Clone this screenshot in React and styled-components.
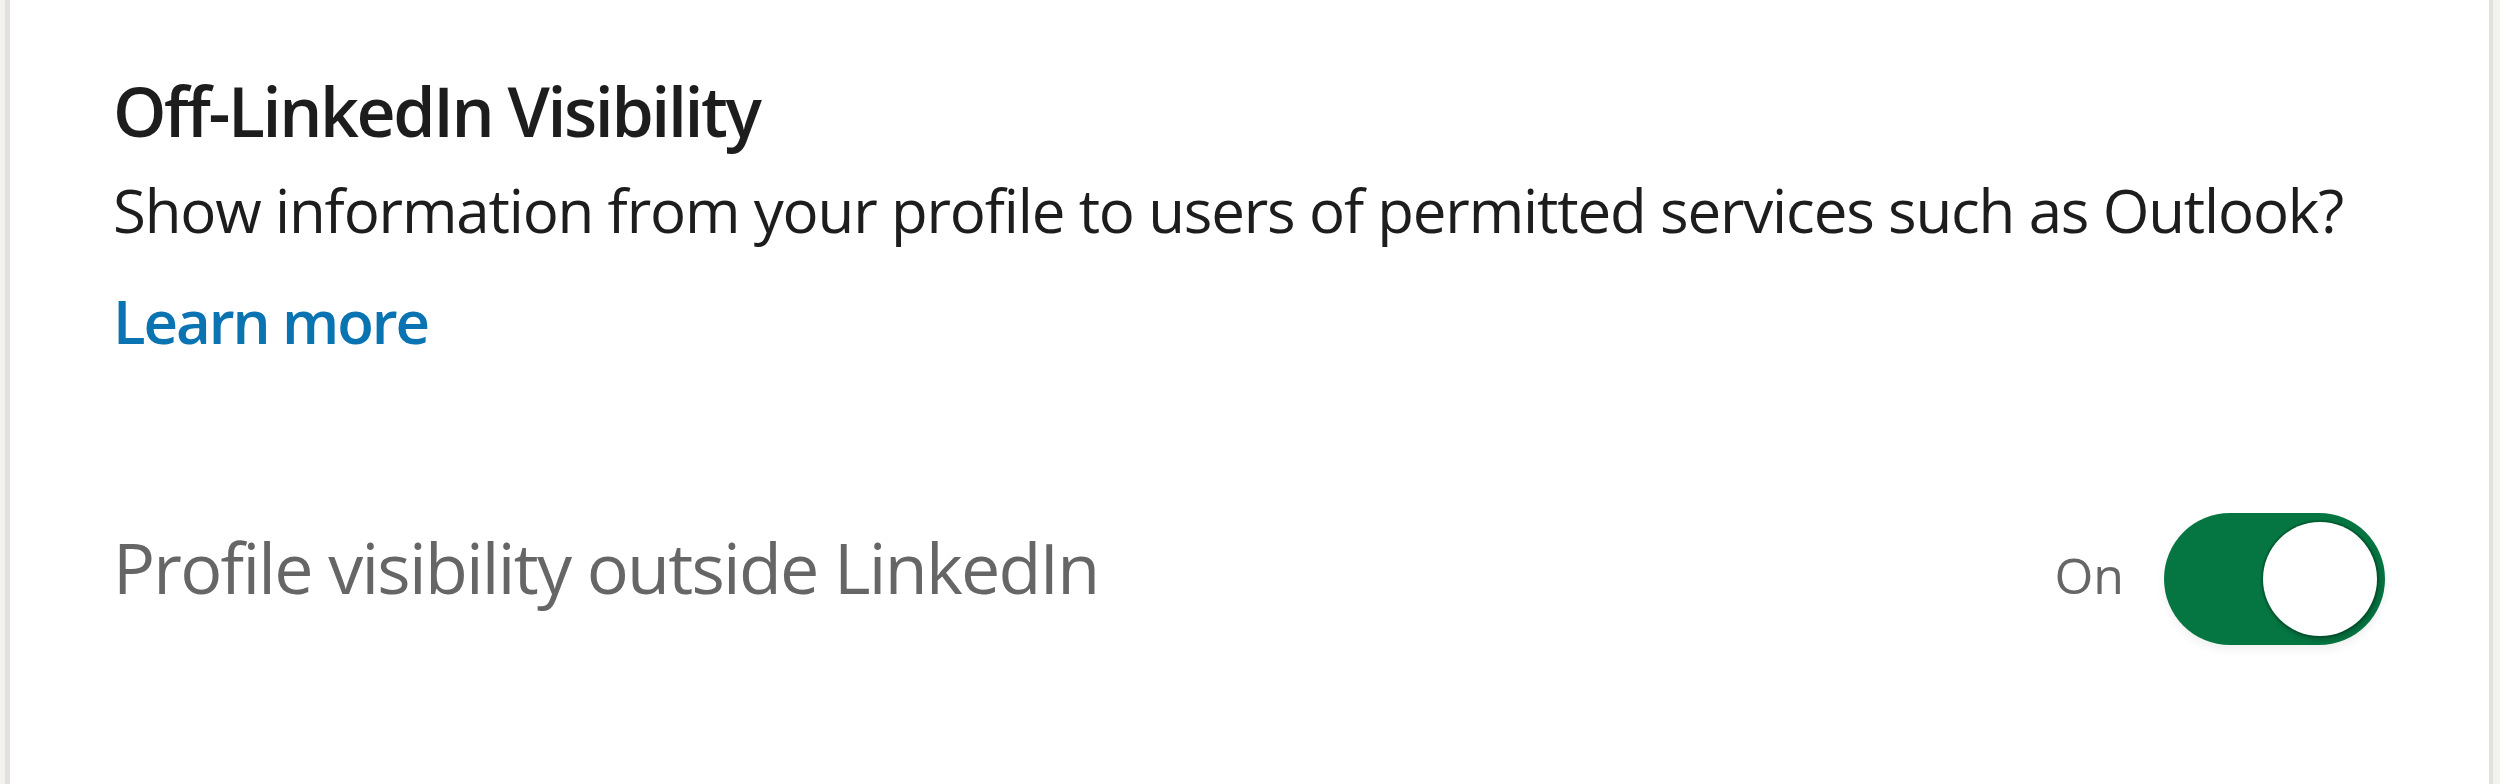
import React from "react";
import styled, { createGlobalStyle } from "styled-components";

const Global = createGlobalStyle`
  html, body { margin: 0; padding: 0; }
  body {
    background: #f3f2ef;
    font-family: "Open Sans", "Noto Sans", sans-serif;
    -webkit-font-smoothing: antialiased;
  }
`;

const Page = styled.div`
  min-height: 784px;
  padding: 0 7px 0 5px;
  display: flex;
  flex-direction: column;
`;

const Card = styled.section`
  flex: 1;
  min-height: 784px;
  box-sizing: border-box;
  background: #ffffff;
  border-left: 5px solid #e2e1de;
  border-right: 4px solid #e2e1de;
  padding: 67px 104px 0 103px;
  display: flex;
  flex-direction: column;
`;

const Title = styled.h2`
  margin: 0;
  font-size: 68px;
  line-height: 88px;
  font-weight: 600;
  color: #1d1d1d;
  letter-spacing: -2.4px;
`;

const Description = styled.p`
  margin: 13px 0 0;
  font-size: 60px;
  line-height: 84px;
  font-weight: 400;
  color: #1d1d1d;
  letter-spacing: -1.17px;
`;

const LearnMore = styled.a`
  margin-top: 27px;
  align-self: flex-start;
  font-size: 60px;
  line-height: 84px;
  font-weight: 600;
  color: #0a73b1;
  text-decoration: none;
  letter-spacing: -2.1px;
`;

const SettingRow = styled.div`
  margin-top: 150px;
  display: flex;
  align-items: baseline;
  justify-content: space-between;
`;

const SettingLabel = styled.span`
  font-size: 70px;
  line-height: 88px;
  font-weight: 400;
  color: #666666;
  letter-spacing: -1.75px;
`;

const ToggleGroup = styled.div`
  display: flex;
  align-items: center;
  gap: 40px;
`;

const StateText = styled.span`
  font-size: 50px;
  line-height: 60px;
  color: #666666;
  margin-bottom: 8px;
`;

const Track = styled.button`
  position: relative;
  width: 221px;
  height: 132px;
  border: none;
  padding: 0;
  border-radius: 66px;
  background: ${(p) => (p.$on ? "#057642" : "#8c8c8c")};
  box-shadow: 0 5px 10px rgba(0, 0, 0, 0.06);
  cursor: pointer;
`;

const Knob = styled.span`
  position: absolute;
  top: 9px;
  ${(p) => (p.$on ? "right: 8px;" : "left: 8px;")}
  width: 114px;
  height: 114px;
  border-radius: 50%;
  background: #ffffff;
  box-shadow: 0 0 0 2px rgba(0, 60, 30, 0.35), 2px 3px 6px rgba(0, 0, 0, 0.3);
`;

function Toggle({ on }) {
  return (
    <Track $on={on} role="switch" aria-checked={on}>
      <Knob $on={on} />
    </Track>
  );
}

export default function App() {
  return (
    <>
      <Global />
      <Page>
        <Card>
          <Title>Off-LinkedIn Visibility</Title>
          <Description>
            Show information from your profile to users of permitted services such as Outlook?
          </Description>
          <LearnMore href="#">Learn more</LearnMore>
          <SettingRow>
            <SettingLabel>Profile visibility outside LinkedIn</SettingLabel>
            <ToggleGroup>
              <StateText>On</StateText>
              <Toggle on />
            </ToggleGroup>
          </SettingRow>
        </Card>
      </Page>
    </>
  );
}
